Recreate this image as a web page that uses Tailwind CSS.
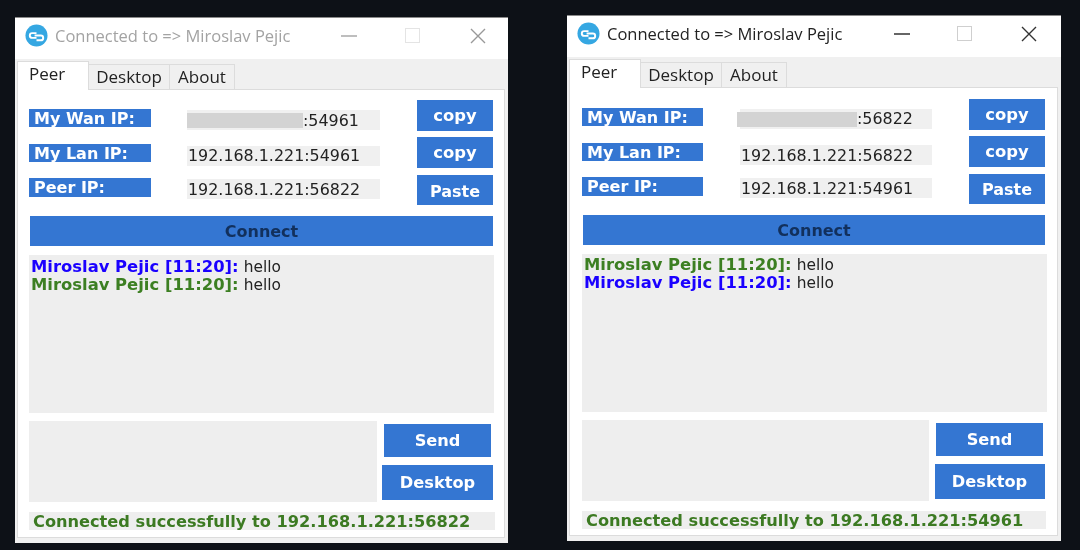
<!DOCTYPE html>
<html lang="en">
<head>
    <meta charset="UTF-8">
    <title>Peer windows</title>
    <script src="https://cdn.jsdelivr.net/npm/@tailwindcss/browser@4"></script>
</head>
<body class="bg-[#0d1117] w-[1080px] h-[550px] overflow-hidden relative font-['DejaVu_Sans',sans-serif]">

    <!-- Left window (inactive) -->
    <div class="absolute left-[15px] top-[17px] w-[493px] h-[525px] bg-white border-t border-[#8a8a8a] blur-[0.4px]">
        <div class="h-[41px] flex items-center pl-[10px] pb-[6px]">
            <svg class="shrink-0 w-[23px] h-[23px]" viewBox="0 0 24 24"><circle cx="12" cy="12" r="11.5" fill="#35a7e2"/><path d="M12 9.5H7.5a2.5 2.5 0 0 0 0 5H12M10 12h6.5a2.5 2.5 0 0 1 0 5H12" fill="none" stroke="#fff" stroke-width="2"/></svg>
            <span class="shrink-0 ml-[7px] mt-[2px] text-[16.5px] whitespace-nowrap text-[#a3a3a3] font-['Open_Sans',sans-serif] w-[251px]">Connected to =&gt; Miroslav Pejic</span>
            <svg class="shrink-0 ml-[35px] w-[16px] h-[16px]" viewBox="0 0 16 16"><path d="M0 8h16" stroke="#a8a8a8" stroke-width="1.5"/></svg>
            <svg class="shrink-0 ml-[48px] w-[15px] h-[15px]" viewBox="0 0 15 15"><rect x=".5" y=".5" width="14" height="14" fill="none" stroke="#e4e4e4"/></svg>
            <svg class="shrink-0 ml-[50px] w-[16px] h-[16px]" viewBox="0 0 16 16"><path d="M1 1l14 14M15 1L1 15" stroke="#999" stroke-width="1.4"/></svg>
        </div>
        <div class="bg-[#f0f0f0] h-[484px] pl-[2px] pr-[3px]">
            <div class="h-[30px] flex items-end text-[17px] text-[#222] font-['Open_Sans',sans-serif]">
                <div class="w-[72px] h-[29px] bg-white border-t border-x border-[#dcdcdc] pl-[11px] leading-[23px] relative top-[1px] z-10">Peer</div>
                <div class="w-[81px] h-[25px] bg-[#f0f0f0] border-t border-r border-[#dcdcdc] flex items-center justify-center pb-[1px]">Desktop</div>
                <div class="w-[65px] h-[25px] bg-[#f0f0f0] border-t border-r border-[#dcdcdc] flex items-center justify-center pb-[1px]">About</div>
            </div>
            <div class="h-[449px] bg-white border border-[#dcdcdc] pl-[11px] pt-[10px]">
                <div class="flex h-[31px]">
                    <div class="w-[122px] h-[18px] mt-[9px] bg-[#3476d2] text-white font-bold text-[16px] leading-[20px] pl-[5px]">My Wan IP:</div>
                    <div class="ml-[36px] w-[193px] h-[20px] mt-[10px] bg-[#f0f0f0] text-[15.9px] leading-[21px] text-[#222] flex items-center">
                        <span class="w-[116px] h-[15px] bg-[#d3d3d3]"></span><span>:54961</span>
                    </div>
                    <button class="ml-[37px] w-[76px] h-[31px] bg-[#3476d2] text-white font-bold text-[16.4px] pt-[2px]">copy</button>
                </div>
                <div class="flex h-[31px] mt-[6px]">
                    <div class="w-[122px] h-[18px] mt-[7px] bg-[#3476d2] text-white font-bold text-[16px] leading-[20px] pl-[5px]">My Lan IP:</div>
                    <div class="ml-[36px] w-[193px] h-[20px] mt-[9px] bg-[#f0f0f0] text-[15.9px] leading-[20px] text-[#222] pl-[1px]">192.168.1.221:54961</div>
                    <button class="ml-[37px] w-[76px] h-[31px] bg-[#3476d2] text-white font-bold text-[16.4px] pt-[2px]">copy</button>
                </div>
                <div class="flex h-[30px] mt-[7px]">
                    <div class="w-[122px] h-[19px] mt-[3px] bg-[#3476d2] text-white font-bold text-[16px] leading-[20px] pl-[5px]">Peer IP:</div>
                    <div class="ml-[36px] w-[193px] h-[20px] mt-[4px] bg-[#f0f0f0] text-[15.9px] leading-[21px] text-[#222] pl-[1px]">192.168.1.221:56822</div>
                    <button class="ml-[37px] w-[76px] h-[30px] bg-[#3476d2] text-white font-bold text-[16px] pt-[3px]">Paste</button>
                </div>
                <button class="block ml-[1px] mt-[11px] w-[463px] h-[30px] bg-[#3476d2] text-[#12305c] font-bold text-[16px] pt-[2px]">Connect</button>
                <div class="mt-[9px] w-[465px] h-[158px] bg-[#eeeeee] text-[16.4px] leading-[18px] pl-[2px] pt-[3px] text-[#222]">
                    <p><b class="text-[#1a00ff]">Miroslav Pejic [11:20]:</b> <span class="text-[15.4px]">hello</span></p>
                    <p><b class="text-[#3c7f22]">Miroslav Pejic [11:20]:</b> <span class="text-[15.4px]">hello</span></p>
                </div>
                <div class="flex mt-[8px]">
                    <div class="w-[348px] h-[81px] bg-[#eeeeee]"></div>
                    <div class="ml-[5px] w-[111px] flex flex-col items-center">
                        <button class="mt-[3px] w-[107px] h-[33px] bg-[#3476d2] text-white font-bold text-[16.2px] pt-[2px]">Send</button>
                        <button class="mt-[8px] w-[111px] h-[35px] bg-[#3476d2] text-white font-bold text-[16.2px] pt-[2px]">Desktop</button>
                    </div>
                </div>
                <div class="mt-[10px] w-[466px] h-[18px] bg-[#eeeeee] text-[#3c7a22] font-bold text-[16.2px] leading-[20px] pl-[4px]">Connected successfully to 192.168.1.221:56822</div>
            </div>
        </div>
    </div>

    <!-- Right window (active) -->
    <div class="absolute left-[567px] top-[15px] w-[494px] h-[525px] bg-white border-t border-[#8a8a8a] blur-[0.4px]">
        <div class="h-[41px] flex items-center pl-[10px] pb-[6px]">
            <svg class="shrink-0 w-[23px] h-[23px]" viewBox="0 0 24 24"><circle cx="12" cy="12" r="11.5" fill="#35a7e2"/><path d="M12 9.5H7.5a2.5 2.5 0 0 0 0 5H12M10 12h6.5a2.5 2.5 0 0 1 0 5H12" fill="none" stroke="#fff" stroke-width="2"/></svg>
            <span class="shrink-0 ml-[7px] mt-[2px] text-[16.5px] whitespace-nowrap text-[#222] font-['Open_Sans',sans-serif] w-[251px]">Connected to =&gt; Miroslav Pejic</span>
            <svg class="shrink-0 ml-[36px] w-[16px] h-[16px]" viewBox="0 0 16 16"><path d="M0 8h16" stroke="#333" stroke-width="1.5"/></svg>
            <svg class="shrink-0 ml-[47px] w-[15px] h-[15px]" viewBox="0 0 15 15"><rect x=".5" y=".5" width="14" height="14" fill="none" stroke="#cfcfcf"/></svg>
            <svg class="shrink-0 ml-[49px] w-[16px] h-[16px]" viewBox="0 0 16 16"><path d="M1 1l14 14M15 1L1 15" stroke="#333" stroke-width="1.4"/></svg>
        </div>
        <div class="bg-[#f0f0f0] h-[484px] pl-[2px] pr-[3px]">
            <div class="h-[30px] flex items-end text-[17px] text-[#222] font-['Open_Sans',sans-serif]">
                <div class="w-[72px] h-[29px] bg-white border-t border-x border-[#dcdcdc] pl-[11px] leading-[23px] relative top-[1px] z-10">Peer</div>
                <div class="w-[81px] h-[25px] bg-[#f0f0f0] border-t border-r border-[#dcdcdc] flex items-center justify-center pb-[1px]">Desktop</div>
                <div class="w-[65px] h-[25px] bg-[#f0f0f0] border-t border-r border-[#dcdcdc] flex items-center justify-center pb-[1px]">About</div>
            </div>
            <div class="h-[449px] bg-white border border-[#dcdcdc] pl-[12px] pt-[11px]">
                <div class="flex h-[31px]">
                    <div class="w-[121px] h-[18px] mt-[9px] bg-[#3476d2] text-white font-bold text-[16px] leading-[20px] pl-[5px]">My Wan IP:</div>
                    <div class="ml-[37px] w-[192px] h-[20px] mt-[10px] bg-[#f0f0f0] text-[15.9px] leading-[20px] text-[#222] flex items-center">
                        <span class="-ml-[3px] w-[120px] h-[15px] bg-[#d3d3d3]"></span><span>:56822</span>
                    </div>
                    <button class="ml-[37px] w-[76px] h-[31px] bg-[#3476d2] text-white font-bold text-[16.4px] pt-[2px]">copy</button>
                </div>
                <div class="flex h-[31px] mt-[6px]">
                    <div class="w-[121px] h-[18px] mt-[7px] bg-[#3476d2] text-white font-bold text-[16px] leading-[20px] pl-[5px]">My Lan IP:</div>
                    <div class="ml-[37px] w-[192px] h-[20px] mt-[9px] bg-[#f0f0f0] text-[15.9px] leading-[21px] text-[#222] pl-[1px]">192.168.1.221:56822</div>
                    <button class="ml-[37px] w-[76px] h-[31px] bg-[#3476d2] text-white font-bold text-[16.4px] pt-[2px]">copy</button>
                </div>
                <div class="flex h-[30px] mt-[7px]">
                    <div class="w-[121px] h-[19px] mt-[3px] bg-[#3476d2] text-white font-bold text-[16px] leading-[20px] pl-[5px]">Peer IP:</div>
                    <div class="ml-[37px] w-[192px] h-[20px] mt-[4px] bg-[#f0f0f0] text-[15.9px] leading-[21px] text-[#222] pl-[1px]">192.168.1.221:54961</div>
                    <button class="ml-[37px] w-[76px] h-[30px] bg-[#3476d2] text-white font-bold text-[16px] pt-[2px]">Paste</button>
                </div>
                <button class="block ml-[1px] mt-[11px] w-[462px] h-[30px] bg-[#3476d2] text-[#12305c] font-bold text-[16px] pt-[2px]">Connect</button>
                <div class="mt-[9px] w-[465px] h-[158px] bg-[#eeeeee] text-[16.4px] leading-[18px] pl-[2px] pt-[2px] text-[#222]">
                    <p><b class="text-[#3c7f22]">Miroslav Pejic [11:20]:</b> <span class="text-[15.4px]">hello</span></p>
                    <p><b class="text-[#1a00ff]">Miroslav Pejic [11:20]:</b> <span class="text-[15.4px]">hello</span></p>
                </div>
                <div class="flex mt-[8px]">
                    <div class="w-[347px] h-[81px] bg-[#eeeeee]"></div>
                    <div class="ml-[5px] w-[111px] flex flex-col items-center">
                        <button class="mt-[3px] w-[107px] h-[33px] bg-[#3476d2] text-white font-bold text-[16.2px] pt-[2px]">Send</button>
                        <button class="mt-[8px] w-[110px] h-[35px] bg-[#3476d2] text-white font-bold text-[16.2px] pt-[2px]">Desktop</button>
                    </div>
                </div>
                <div class="mt-[10px] w-[464px] h-[18px] bg-[#eeeeee] text-[#3c7a22] font-bold text-[16.2px] leading-[20px] pl-[4px]">Connected successfully to 192.168.1.221:54961</div>
            </div>
        </div>
    </div>
</body>
</html>
